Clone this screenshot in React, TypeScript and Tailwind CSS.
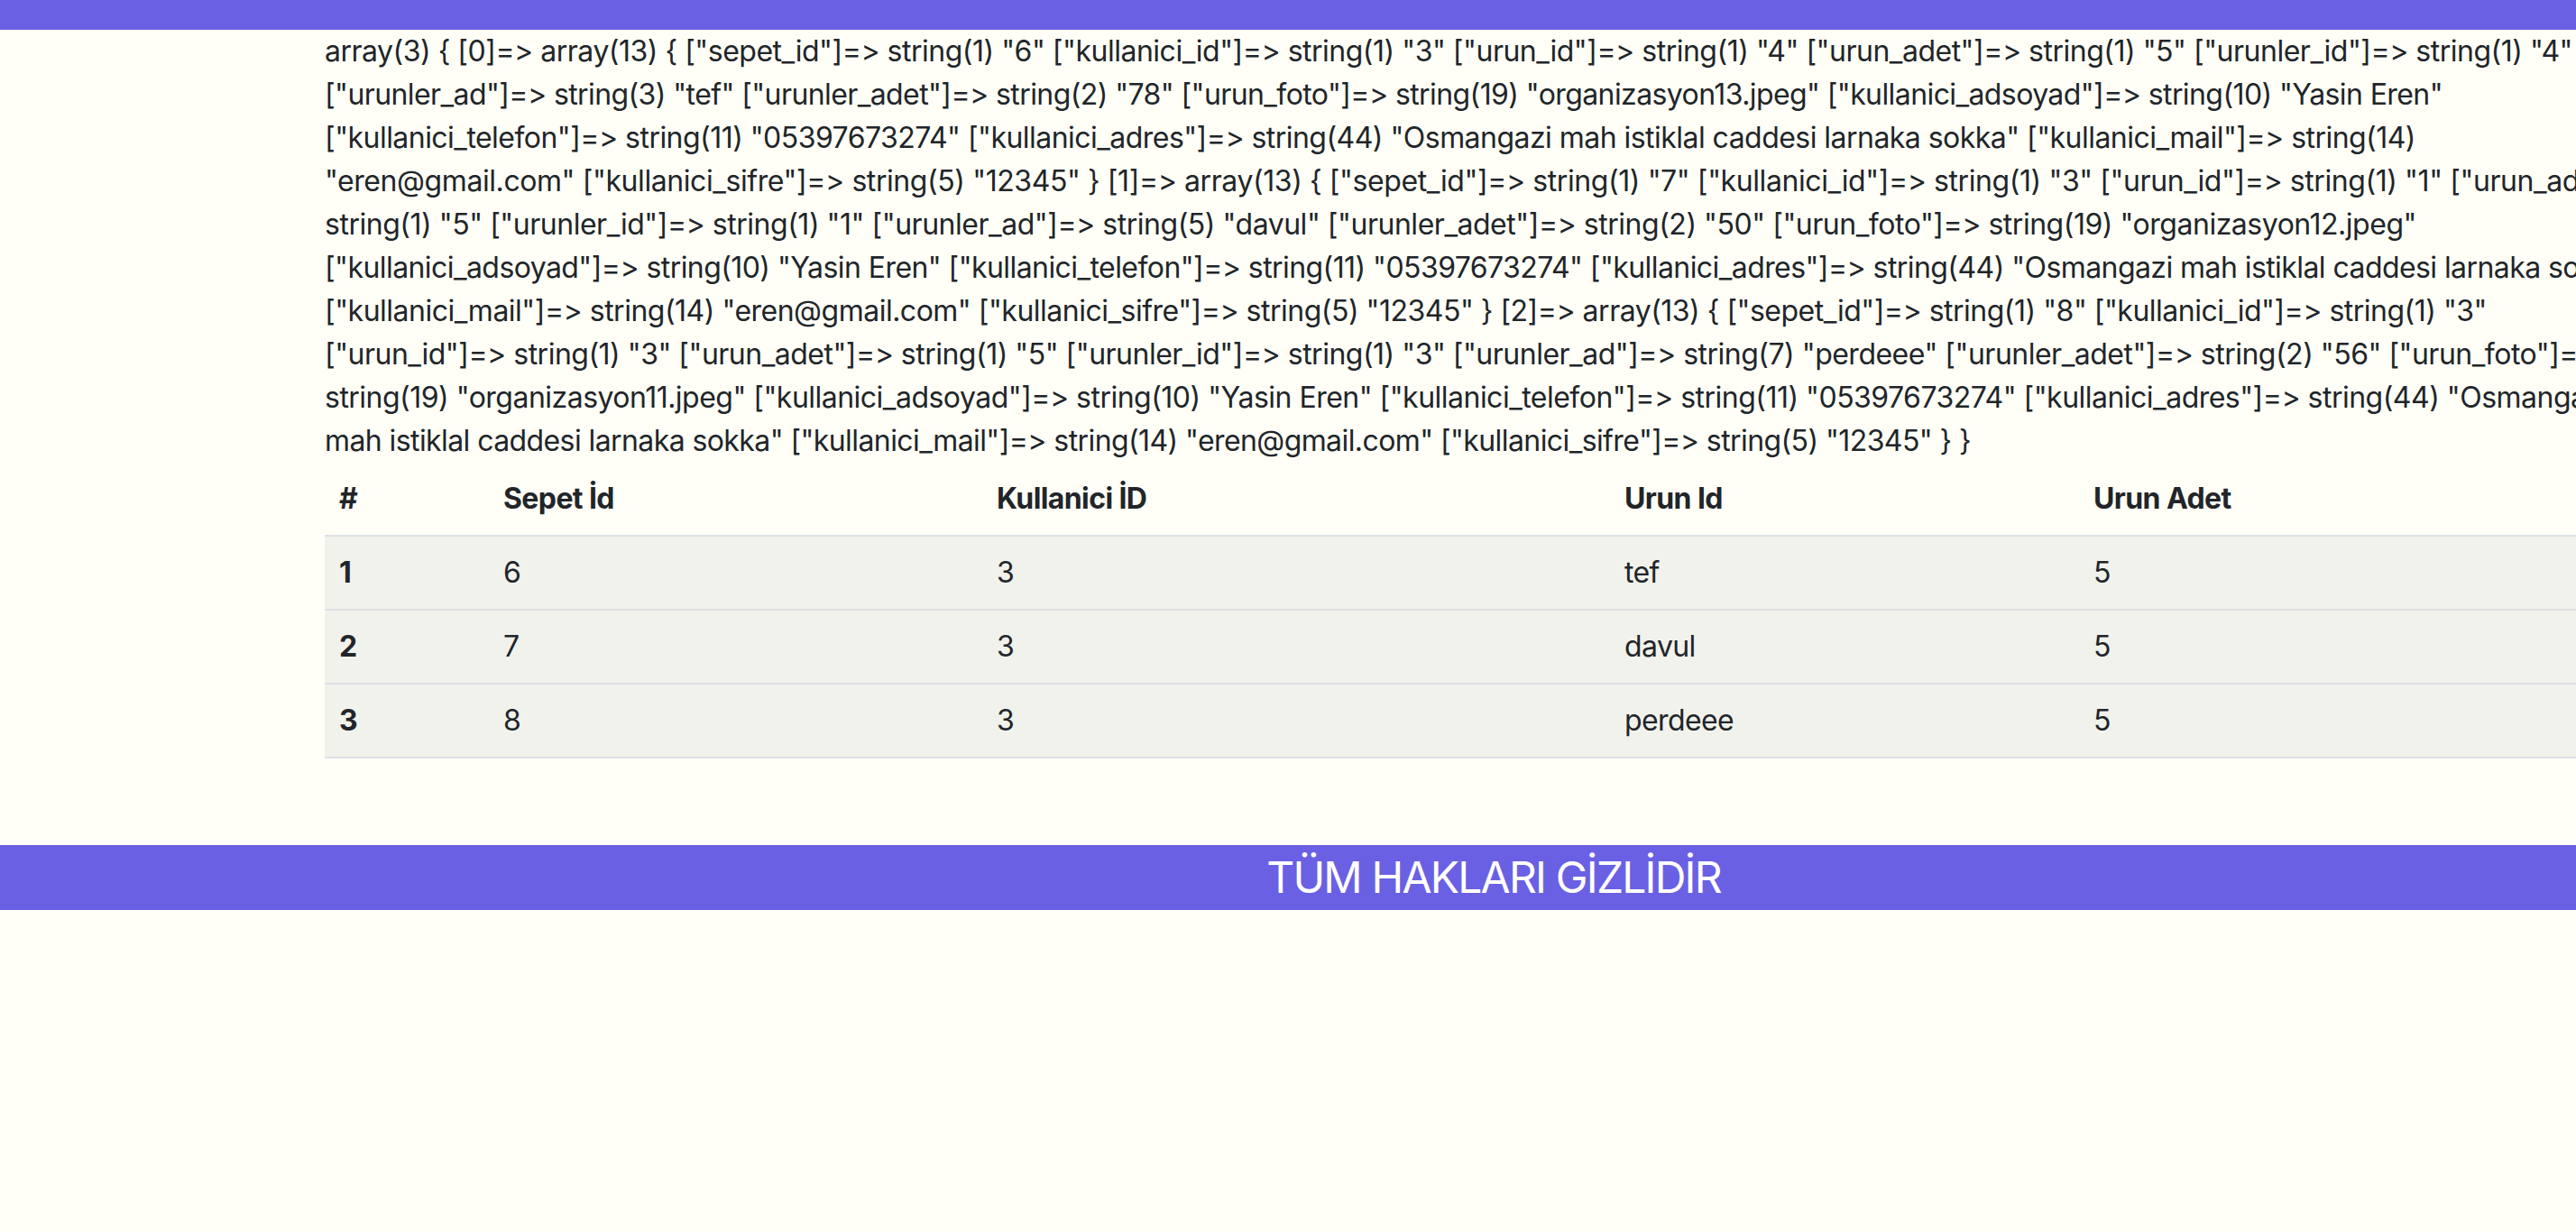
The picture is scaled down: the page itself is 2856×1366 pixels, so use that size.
import { useLayoutEffect, useRef, useState } from 'react'

// var_dump lines as the page wrapped them; `upto` + `width` = where that text ends in the shot
const dump: { text: string, upto?: string, width: number }[] = [
  { text: 'array(3) { [0]=> array(13) { ["sepet_id"]=> string(1) "6" ["kullanici_id"]=> string(1) "3" ["urun_id"]=> string(1) "4" ["urun_adet"]=> string(1) "5" ["urunler_id"]=> string(1) "4"', width: 2492 },
  { text: '["urunler_ad"]=> string(3) "tef" ["urunler_adet"]=> string(2) "78" ["urun_foto"]=> string(19) "organizasyon13.jpeg" ["kullanici_adsoyad"]=> string(10) "Yasin Eren"', width: 2348 },
  { text: '["kullanici_telefon"]=> string(11) "05397673274" ["kullanici_adres"]=> string(44) "Osmangazi mah istiklal caddesi larnaka sokka" ["kullanici_mail"]=> string(14)', width: 2318 },
  { text: '"eren@gmail.com" ["kullanici_sifre"]=> string(5) "12345" } [1]=> array(13) { ["sepet_id"]=> string(1) "7" ["kullanici_id"]=> string(1) "3" ["urun_id"]=> string(1) "1" ["urun_adet"]=>', upto: '["urun_ad', width: 2500 },
  { text: 'string(1) "5" ["urunler_id"]=> string(1) "1" ["urunler_ad"]=> string(5) "davul" ["urunler_adet"]=> string(2) "50" ["urun_foto"]=> string(19) "organizasyon12.jpeg"', width: 2319 },
  { text: '["kullanici_adsoyad"]=> string(10) "Yasin Eren" ["kullanici_telefon"]=> string(11) "05397673274" ["kullanici_adres"]=> string(44) "Osmangazi mah istiklal caddesi larnaka sokka"', upto: 'larnaka so', width: 2500 },
  { text: '["kullanici_mail"]=> string(14) "eren@gmail.com" ["kullanici_sifre"]=> string(5) "12345" } [2]=> array(13) { ["sepet_id"]=> string(1) "8" ["kullanici_id"]=> string(1) "3"', width: 2397 },
  { text: '["urun_id"]=> string(1) "3" ["urun_adet"]=> string(1) "5" ["urunler_id"]=> string(1) "3" ["urunler_ad"]=> string(7) "perdeee" ["urunler_adet"]=> string(2) "56" ["urun_foto"]=>', upto: '["urun_foto"]=', width: 2498 },
  { text: 'string(19) "organizasyon11.jpeg" ["kullanici_adsoyad"]=> string(10) "Yasin Eren" ["kullanici_telefon"]=> string(11) "05397673274" ["kullanici_adres"]=> string(44) "Osmangazi', upto: '"Osmang', width: 2490 },
  { text: 'mah istiklal caddesi larnaka sokka" ["kullanici_mail"]=> string(14) "eren@gmail.com" ["kullanici_sifre"]=> string(5) "12345" } }', width: 1825 },
]

const rows = [
  { no: 1, sepet: '6', kullanici: '3', urun: 'tef', adet: '5' },
  { no: 2, sepet: '7', kullanici: '3', urun: 'davul', adet: '5' },
  { no: 3, sepet: '8', kullanici: '3', urun: 'perdeee', adet: '5' },
]

function DumpLine({ text, upto, width }: { text: string, upto?: string, width: number }) {
  const ref = useRef<HTMLDivElement>(null)
  const current = useRef(0)
  const [spacing, setSpacing] = useState(0)

  useLayoutEffect(() => {
    const measure = () => {
      const node = ref.current?.firstChild
      if (!node) return
      const end = upto ? text.indexOf(upto) + upto.length : text.length
      const range = document.createRange()
      range.setStart(node, 0)
      range.setEnd(node, end)
      const natural = range.getBoundingClientRect().width - current.current * end
      const next = (width - natural) / end
      current.current = next
      setSpacing(next)
    }
    measure()
    document.fonts?.ready.then(measure)
  }, [text, upto, width])

  return (
    <div ref={ref} className="whitespace-nowrap" style={{ letterSpacing: `${spacing}px` }}>{text}</div>
  )
}

export default function App() {
  return (
    <div className="min-h-screen overflow-hidden bg-[#fffff7] text-[#212529] font-['Inter','Noto_Sans',sans-serif] [font-feature-settings:'calt'_0,'liga'_0]">
      <div className="w-[3312px]">
        <header className="h-[33px] bg-[#6a60e3]" />

        <main className="ml-[360px]">
          <div className="text-[32px] leading-[48px]">
            {dump.map((l, i) => (
              <DumpLine key={i} {...l} />
            ))}
          </div>

          <table className="table-fixed border-collapse text-left text-[32px] leading-[48px] tracking-[-0.6px] w-[2900px]">
            <colgroup>
              <col className="w-[182px]" />
              <col className="w-[547px]" />
              <col className="w-[696px]" />
              <col className="w-[520px]" />
              <col className="w-[955px]" />
            </colgroup>
            <thead>
              <tr className="border-b-2 border-[#dee2e6]">
                <th className="p-4 font-bold">#</th>
                <th className="p-4 font-bold">Sepet İd</th>
                <th className="p-4 font-bold">Kullanici İD</th>
                <th className="p-4 font-bold">Urun Id</th>
                <th className="p-4 font-bold">Urun Adet</th>
              </tr>
            </thead>
            <tbody className="bg-[#f2f2ec]">
              {rows.map(r => (
                <tr key={r.no} className="border-b-2 border-[#dee2e6]">
                  <th className="p-4 font-bold">{r.no}</th>
                  <td className="p-4">{r.sepet}</td>
                  <td className="p-4">{r.kullanici}</td>
                  <td className="p-4">{r.urun}</td>
                  <td className="p-4">{r.adet}</td>
                </tr>
              ))}
            </tbody>
          </table>
        </main>

        <footer className="mt-[96px] bg-[#6a60e3] text-center text-white text-[48px] leading-[72px] tracking-[-1.8px]">
          TÜM HAKLARI GİZLİDİR
        </footer>
      </div>
    </div>
  )
}
